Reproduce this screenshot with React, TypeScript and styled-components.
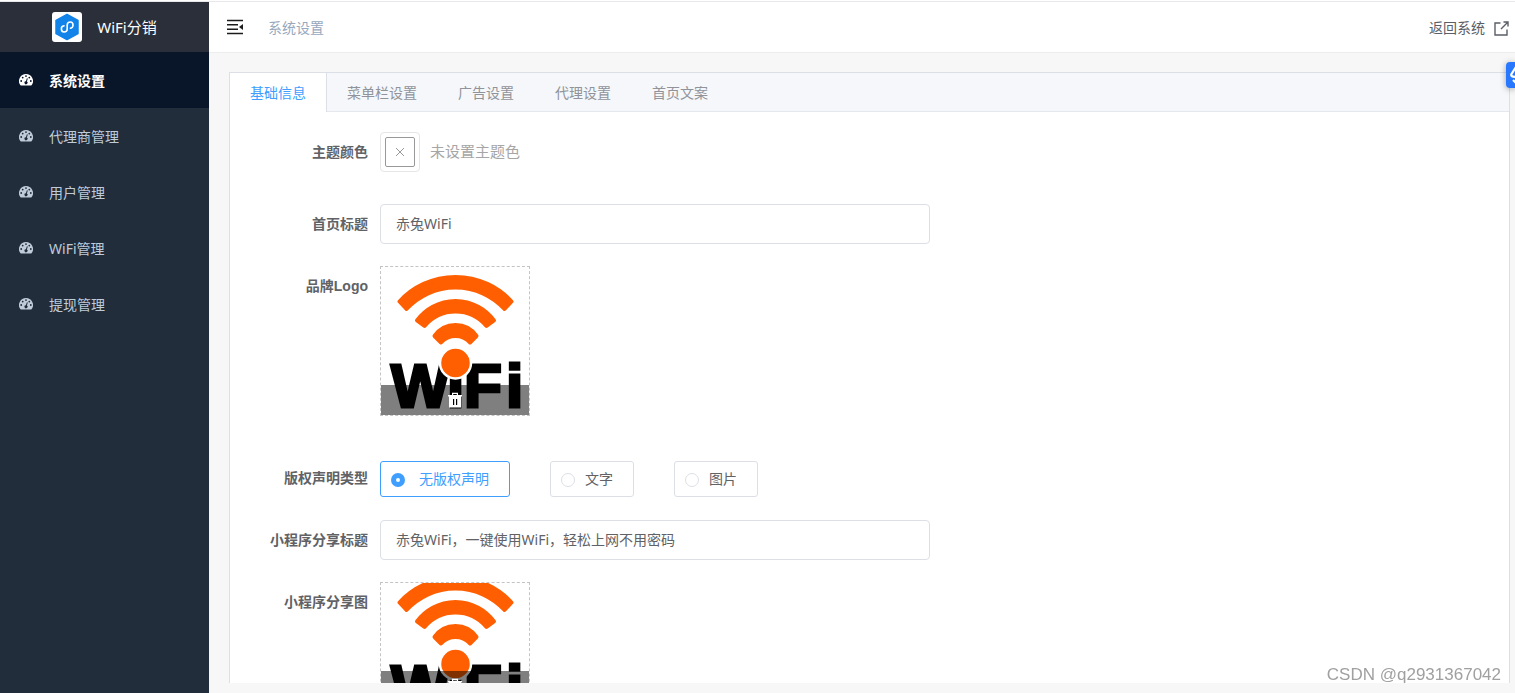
import React, { useState } from "react";
import styled, { createGlobalStyle, css } from "styled-components";

const sans = `"Noto Sans", "Noto Sans CJK SC", sans-serif`;

const GlobalStyle = createGlobalStyle`
  *, *::before, *::after { box-sizing: border-box; }
  body {
    margin: 0;
    background: #f7f7f7;
    color: #606266;
    font: 14px/20px ${sans};
  }
  button, input { font: inherit; color: inherit; }
`;

const Page = styled.div`
  display: flex;
  flex-direction: column;
  height: 100vh;
  overflow: hidden;
`;

const TopStrip = styled.div`
  flex: none;
  height: 2px;
  background: #fff;
  border-bottom: 1px solid #e8e8ea;
`;

const Shell = styled.div`
  display: flex;
  flex: 1;
  min-height: 0;
`;

const Sidebar = styled.aside`
  flex: none;
  width: 209px;
  background: #222d3c;
`;

const Brand = styled.div`
  display: flex;
  align-items: center;
  justify-content: center;
  gap: 15px;
  height: 50px;
  background: #2b2f3a;
  color: #fff;
  font-size: 15px;
`;

const BrandLogo = styled.svg`
  width: 30px;
  height: 30px;
  border-radius: 3px;
  background: #fff;
`;

const NavLink = styled.a<{ $active?: boolean }>`
  display: flex;
  align-items: center;
  gap: 16px;
  height: 56px;
  padding: 0 19px;
  color: #bfcbd9;
  line-height: 20px;
  text-decoration: none;
  span { padding-top: 2px; }
  ${(p) =>
    p.$active &&
    css`
      background: #091528;
      color: #fff;
      font-weight: 700;
    `}
`;

const NavIcon = styled.svg`
  width: 14px;
  height: 14px;
  fill: currentColor;
`;

const Main = styled.main`
  display: flex;
  flex-direction: column;
  flex: 1;
  min-width: 0;
`;

const Header = styled.header`
  display: flex;
  flex: none;
  align-items: center;
  gap: 24px;
  height: 51px;
  padding: 0 6px 0 17px;
  background: #fff;
  border-bottom: 1px solid #ededee;
`;

const IconButton = styled.button`
  display: flex;
  padding: 0;
  border: 0;
  background: none;
  color: #1c1c1c;
  cursor: pointer;
`;

const Crumb = styled.span`
  padding-top: 2px;
  color: #97a8be;
`;

const BackLink = styled.a`
  display: flex;
  align-items: center;
  gap: 9px;
  margin-left: auto;
  padding-top: 2px;
  color: #5a5e66;
  text-decoration: none;
`;

const Content = styled.div`
  flex: 1;
  min-height: 0;
  display: flex;
  padding: 19px 5px 10px 20px;
`;

const Panel = styled.section`
  flex: 1;
  min-width: 0;
  overflow: hidden;
  background: #fff;
  border: 1px solid #dcdfe6;
  border-bottom: 0;
`;

const Tabs = styled.div`
  display: flex;
  height: 39px;
  background: #f5f7fa;
  box-shadow: inset 0 -1px #e4e7ed;
`;

const Tab = styled.button<{ $active: boolean }>`
  padding: 0 20px;
  border: 0;
  border-right: 1px solid transparent;
  background: none;
  color: #909399;
  cursor: pointer;
  ${(p) =>
    p.$active &&
    css`
      background: #fff;
      border-right-color: #dcdfe6;
      color: #409eff;
    `}
`;

const Form = styled.form`
  display: flex;
  flex-direction: column;
  gap: 22px;
  padding: 20px;
`;

const Field = styled.div<{ $after?: number }>`
  display: flex;
  gap: 12px;
  margin-bottom: ${(p) => p.$after ?? 0}px;
`;

const Label = styled.label`
  flex: none;
  width: 118px;
  text-align: right;
  font: 700 14px/40px "Liberation Sans", "Noto Sans CJK SC", sans-serif;
`;

const TextInput = styled.input`
  flex: 0 1 550px;
  min-width: 0;
  height: 40px;
  padding: 0 15px 2px;
  border: 1px solid #dcdfe6;
  border-radius: 4px;
  background: #fff;
`;

const ColorField = styled.div`
  display: flex;
  gap: 10px;
`;

const ColorTrigger = styled.button`
  display: flex;
  width: 40px;
  height: 40px;
  padding: 4px;
  border: 1px solid #e6e6e6;
  border-radius: 4px;
  background: #fff;
  cursor: pointer;
`;

const ColorSwatch = styled.span`
  display: flex;
  flex: 1;
  align-items: center;
  justify-content: center;
  height: 30px;
  border: 1px solid #999;
  border-radius: 2px;
  color: #999;
`;

const ColorHint = styled.span`
  color: #a6a6a6;
  font-size: 15px;
  line-height: 38px;
`;

const Upload = styled.div<{ $height: number }>`
  position: relative;
  display: flex;
  align-items: center;
  width: 150px;
  height: ${(p) => p.$height}px;
  border: 1px dashed #c4c4c4;
  overflow: hidden;
`;

const Picture = styled.svg`
  flex: none;
  width: 148px;
  height: 148px;
`;

const RemoveBar = styled.button`
  position: absolute;
  inset: auto 0 0;
  display: flex;
  align-items: center;
  justify-content: center;
  height: 30px;
  padding: 0;
  border: 0;
  background: rgba(0, 0, 0, 0.5);
  cursor: pointer;
`;

const RadioGroup = styled.div`
  display: flex;
  gap: 40px;
  padding-top: 3px;
`;

const RadioCard = styled.label<{ $checked: boolean; $wide?: boolean }>`
  display: flex;
  align-items: center;
  gap: ${(p) => (p.$wide ? 14 : 10)}px;
  height: 36px;
  padding: 0 20px 0 10px;
  border: 1px solid ${(p) => (p.$checked ? "#409eff" : "#dcdfe6")};
  border-radius: 3px;
  color: ${(p) => (p.$checked ? "#409eff" : "#606266")};
  cursor: pointer;
`;

const Radio = styled.input`
  appearance: none;
  width: 14px;
  height: 14px;
  margin: 2px 0 0;
  border: 1px solid #dcdfe6;
  border-radius: 50%;
  background: #fff;
  &:checked {
    border: 5px solid #409eff;
  }
`;

const SideBadge = styled.button`
  position: fixed;
  top: 62px;
  right: 0;
  width: 9px;
  height: 26px;
  padding: 0;
  border: 0;
  border-radius: 4px 0 0 4px;
  overflow: hidden;
  background: #2878ff;
  box-shadow: 0 1px 6px rgba(0, 0, 0, 0.35);
  cursor: pointer;
  svg { display: block; }
`;

const Watermark = styled.div`
  position: fixed;
  right: 14px;
  bottom: 8px;
  color: #a0a0a0;
  font: 17px/20px "Liberation Sans", sans-serif;
  text-shadow: 1px 1px #fff;
`;

const Gauge = () => (
  <NavIcon viewBox="0 0 14 14" aria-hidden="true">
    <path
      fillRule="evenodd"
      d="M7 1a7 7 0 0 0-5.9 10.8c.2.4.5.6.9.6h10c.4 0 .7-.2.9-.6A7 7 0 0 0 7 1ZM2.200 7.100a.9.9 0 1 0 0 1.800.9.9 0 0 0 0-1.800Zm1.500-3.400a.9.9 0 1 0 0 1.800.9.9 0 0 0 0-1.800ZM7 2.200a.9.9 0 1 0 0 1.800.9.9 0 0 0 0-1.800Zm3.300 1.500a.9.9 0 1 0 0 1.800.9.9 0 0 0 0-1.800ZM11.800 7.100a.9.9 0 1 0 0 1.800.9.9 0 0 0 0-1.800ZM7.900 5.300 6.900 8.300a1.500 1.500 0 1 0 1 .3l.9-3Z"
    />
  </NavIcon>
);

const MenuFold = () => (
  <svg width="18" height="16" viewBox="0 0 18 16" aria-hidden="true">
    <path d="M1 1.500h16M1 5.800h11M1 10.200h11M1 14.500h16" stroke="currentColor" strokeWidth="1.600" />
    <path d="M17 5v6l-4-3Z" fill="currentColor" />
  </svg>
);

const OpenExternal = () => (
  <svg width="15" height="15" viewBox="0 0 15 15" fill="none" stroke="currentColor" strokeWidth="1.400" aria-hidden="true">
    <path d="M6.500 2H1v12h12V8.500M7 8 13.500 1.500M9.500 1H14v4.500" />
  </svg>
);

const Trash = () => (
  <svg width="14" height="16" viewBox="0 0 14 16" aria-hidden="true">
    <path fillRule="evenodd" fill="#fff" d="M4 3V.8h6V3h4v1.500h-1V15.500H1V4.500H0V3ZM5.200 2v1h3.600V2ZM5 7v6h1.200V7ZM8 7v6h1.200V7Z" />
  </svg>
);

const WifiPicture = () => (
  <Picture viewBox="0 0 148 148" role="img" aria-label="WiFi">
    <g fill="#ff5f00" stroke="#ff5f00" strokeWidth="4" strokeLinejoin="round">
      <path d="M18.500 34.500A76 76 0 0 1 130.500 34.500L123.500 42A66.600 66.600 0 0 0 25.500 42Z" />
      <path d="M36 53.500A47.700 47.700 0 0 1 113 53.500L105.500 59A40.400 40.400 0 0 0 43.500 59Z" />
      <path d="M53.500 69A25.500 25.500 0 0 1 95.500 69L89 75.500A19.400 19.400 0 0 0 60 75.500Z" />
    </g>
    <text
      x="10 66 83 125"
      y="140"
      fill="#000"
      stroke="#000"
      strokeWidth="3"
      fontFamily="Liberation Sans"
      fontWeight="700"
      fontSize="62"
    >
      WiFi
    </text>
    <circle cx="74.500" cy="96" r="15.500" fill="#ff5f00" stroke="#fff" strokeWidth="2.500" />
  </Picture>
);

const navItems = ["系统设置", "代理商管理", "用户管理", "WiFi管理", "提现管理"];
const tabItems = ["基础信息", "菜单栏设置", "广告设置", "代理设置", "首页文案"];
const copyrightTypes = ["无版权声明", "文字", "图片"];

export default function App() {
  const [tab, setTab] = useState(tabItems[0]);
  const [copyright, setCopyright] = useState(copyrightTypes[0]);

  return (
    <Page>
      <GlobalStyle />
      <TopStrip />
      <Shell>
        <Sidebar>
          <Brand>
            <BrandLogo viewBox="0 0 30 30" aria-hidden="true">
              <path d="M15 2.500 26 8.500v13L15 27.500 4 21.500v-13Z" fill="#1283e8" stroke="#1283e8" strokeWidth="1.500" strokeLinejoin="round" />
              <path d="M12 13.800C8.200 14.500 8.800 20 12 20c2 0 3.200-1.300 3.200-3v-4c0-1.700 1.200-3 3.200-3 3.200 0 3.800 5.500 0 6.200" fill="none" stroke="#fff" strokeWidth="1.600" strokeLinecap="round" />
            </BrandLogo>
            <span>WiFi分销</span>
          </Brand>
          <nav>
            {navItems.map((item, i) => (
              <NavLink key={item} href="#" $active={i === 0}>
                <Gauge />
                <span>{item}</span>
              </NavLink>
            ))}
          </nav>
        </Sidebar>
        <Main>
          <Header>
            <IconButton aria-label="收起菜单">
              <MenuFold />
            </IconButton>
            <Crumb>系统设置</Crumb>
            <BackLink href="#">
              返回系统
              <OpenExternal />
            </BackLink>
          </Header>
          <Content>
            <Panel>
              <Tabs role="tablist">
                {tabItems.map((item) => (
                  <Tab key={item} role="tab" aria-selected={item === tab} $active={item === tab} onClick={() => setTab(item)}>
                    {item}
                  </Tab>
                ))}
              </Tabs>
              <Form>
                <Field $after={10}>
                  <Label htmlFor="theme">主题颜色</Label>
                  <ColorField>
                    <ColorTrigger id="theme" type="button">
                      <ColorSwatch>
                        <svg width="10" height="10" viewBox="0 0 10 10" stroke="currentColor" aria-hidden="true">
                          <path d="m1 1 8 8M9 1 1 9" />
                        </svg>
                      </ColorSwatch>
                    </ColorTrigger>
                    <ColorHint>未设置主题色</ColorHint>
                  </ColorField>
                </Field>
                <Field>
                  <Label htmlFor="home-title">首页标题</Label>
                  <TextInput id="home-title" defaultValue="赤兔WiFi" />
                </Field>
                <Field $after={20}>
                  <Label htmlFor="logo">品牌Logo</Label>
                  <Upload $height={150}>
                    <WifiPicture />
                    <RemoveBar id="logo" type="button" aria-label="删除品牌Logo">
                      <Trash />
                    </RemoveBar>
                  </Upload>
                </Field>
                <Field>
                  <Label as="span" id="copyright">版权声明类型</Label>
                  <RadioGroup role="radiogroup" aria-labelledby="copyright">
                    {copyrightTypes.map((item, i) => (
                      <RadioCard key={item} $checked={item === copyright} $wide={i === 0}>
                        <Radio type="radio" name="copyright" checked={item === copyright} onChange={() => setCopyright(item)} />
                        {item}
                      </RadioCard>
                    ))}
                  </RadioGroup>
                </Field>
                <Field>
                  <Label htmlFor="share-title">小程序分享标题</Label>
                  <TextInput id="share-title" defaultValue="赤兔WiFi，一键使用WiFi，轻松上网不用密码" />
                </Field>
                <Field>
                  <Label htmlFor="share-picture">小程序分享图</Label>
                  <Upload $height={120}>
                    <WifiPicture />
                    <RemoveBar id="share-picture" type="button" aria-label="删除小程序分享图">
                      <Trash />
                    </RemoveBar>
                  </Upload>
                </Field>
              </Form>
            </Panel>
          </Content>
        </Main>
      </Shell>
      <SideBadge aria-label="展开工具">
        <svg width="18" height="26" viewBox="0 0 18 26" fill="none" stroke="#fff" strokeWidth="2.200" aria-hidden="true">
          <path d="M10 5 5.500 12q-1.500 3 5 3M7 18l4 4" />
        </svg>
      </SideBadge>
      <Watermark>CSDN @q2931367042</Watermark>
    </Page>
  );
}
